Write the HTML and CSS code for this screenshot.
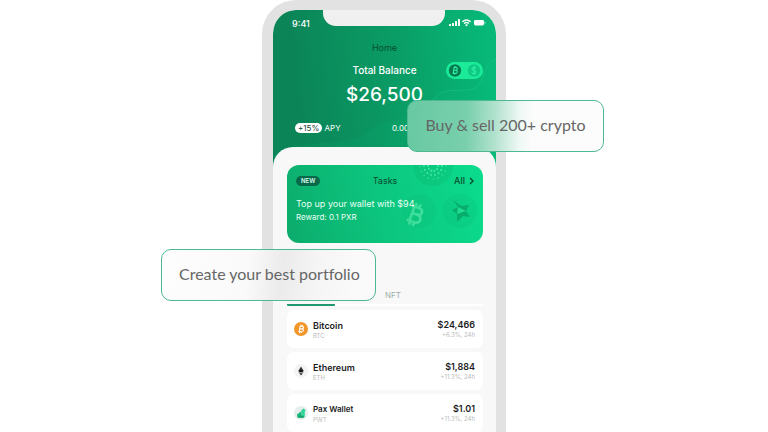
FILE: index.html
```html
<!doctype html>
<html lang="en">
<head>
	<meta charset="UTF-8" />
	<title>Crypto wallet</title>
	<link rel="stylesheet" href="styles.css">
</head>
<body>
	<main class="stage">
		<div class="device">
			<section class="phone">
				<div class="notch"></div>
				<header class="hero">
					<svg class="wave" viewBox="0 0 223 160" preserveAspectRatio="none" aria-hidden="true">
						<path d="M223 50C208 54 213 78 198 81C181 84 169 77 158 94C145 117 114 106 92 126C68 142 34 128 0 148V160H223Z" fill="#14d689" fill-opacity=".07"/>
						<path d="M223 50C208 54 213 78 198 81C181 84 169 77 158 94" fill="none" stroke="#35d99a" stroke-opacity=".3"/>
					</svg>
					<div class="status">
						<time>9:41</time>
						<svg width="37" height="8" viewBox="0 0 37 8" fill="#fff" aria-hidden="true">
							<rect x="0" y="5" width="2" height="2" rx=".5"/>
							<rect x="3" y="4" width="2" height="3" rx=".5"/>
							<rect x="6" y="2" width="2" height="5" rx=".5"/>
							<rect x="9" y="0" width="2" height="7" rx=".5"/>
							<path d="M13.4 2.8Q17.5-.8 21.6 2.8M15 4.6Q17.5 2.4 20 4.6" fill="none" stroke="#fff" stroke-width="1.3"/>
							<path d="M16 5.8Q17.5 4.8 19 5.8L17.5 7.4Z"/>
							<rect x="25" y="1" width="10" height="5.5" rx="1.4"/>
							<rect x="35.5" y="2.8" width="1" height="2" rx=".5" opacity=".6"/>
						</svg>
					</div>
					<h1>Home</h1>
					<div class="total">
						<h2>Total Balance</h2>
						<button class="currency" type="button" aria-label="Switch currency">
							<svg width="37" height="17" viewBox="0 0 37 17" aria-hidden="true">
								<circle cx="9" cy="8.5" r="6.2" fill="#087a50"/>
								<path d="M7.6 5.4H9.8Q11.4 5.5 11.2 7Q11 8.3 9.6 8.3H7.4M9.6 8.3Q11.5 8.4 11.2 10Q11 11.4 9.3 11.4H6.6M8.2 5.4L7.4 11.4M9 4.2V5.4M8.6 11.4V12.6" fill="none" stroke="#2ff3a8" stroke-width="1.1"/>
								<circle cx="28" cy="8.5" r="6.2" fill="#0fc983"/>
								<path d="M30.2 6.6Q29.7 5.3 28 5.3Q25.9 5.4 25.9 6.9Q26 8.2 28 8.5Q30.2 8.8 30.2 10.2Q30 11.7 28 11.7Q26.2 11.7 25.7 10.3M28 4V13" fill="none" stroke="#2ff3a8" stroke-width="1"/>
							</svg>
						</button>
					</div>
					<p class="amount">$26,500</p>
					<div class="yield">
						<p><b>+15%</b> APY</p>
						<p>0.00</p>
					</div>
				</header>
				<div class="sheet">
					<article class="task">
						<svg class="coins" width="82" height="78" viewBox="0 0 82 78" aria-hidden="true">
							<circle cx="32" cy="1" r="20" fill="#079a5f" fill-opacity=".16"/>
							<g fill="none" stroke="#66f5ba" stroke-width="1.8" stroke-linecap="round" stroke-opacity=".8">
								<circle cx="32" cy="1" r="5" stroke-dasharray="0 3.1"/>
								<circle cx="32" cy="1" r="9" stroke-dasharray="0 4"/>
								<circle cx="32" cy="1" r="13" stroke-width="1.2" stroke-dasharray="0 5"/>
							</g>
							<circle cx="18" cy="46" r="17" fill="#0a9d63" fill-opacity=".08"/>
							<g fill="none" stroke="#4fe6a5" stroke-opacity=".75" stroke-width="2.6" transform="rotate(20 14 49)">
								<path d="M9 42H15Q20 42 20 45.5Q20 49 15 49H10M15 49Q21 49 21 53Q21 57 15 57H8M11 42V57M12 38V42M16 38V42M12 57V61M16 57V61"/>
							</g>
							<circle cx="59" cy="46" r="17" fill="#0a9d63" fill-opacity=".1"/>
							<path d="M52 35L60 41L68 40L65 46L69 52L62 51L56 57L56 49L51 45L57 42Z" fill="#08995f" fill-opacity=".65"/>
							<path d="M57 42L65 46L56 49Z" fill="#20dc90"/>
						</svg>
						<div class="task-head">
							<span class="badge">NEW</span>
							<h3>Tasks</h3>
							<a href="#all">All <svg width="5" height="8" viewBox="0 0 5 8" aria-hidden="true"><path d="M1 1L4 4L1 7" fill="none" stroke="#07492f" stroke-width="1.4"/></svg></a>
						</div>
						<p class="task-title">Top up your wallet with $94</p>
						<p class="reward">Reward: 0.1 PXR</p>
					</article>
					<nav class="tabs">
						<button class="active" type="button" aria-label="Coins"></button>
						<button type="button">NFT</button>
					</nav>
					<ul class="coin-list">
						<li>
							<svg width="14" height="14" viewBox="0 0 14 14" aria-hidden="true">
								<circle cx="7" cy="7" r="7" fill="#f0962a"/>
								<path d="M5.8 4.2H8Q9.6 4.3 9.5 5.6Q9.3 6.8 8 6.9H5.4M8 6.9Q9.6 7 9.3 8.5Q9 9.8 7.5 9.8H4.5M6.2 4.2L5.2 9.8M7 2.9L6.8 4.2M8.6 3L8.4 4.3M5.9 9.8L5.7 11M7.5 9.8L7.3 11" fill="none" stroke="#fff" stroke-width="1.1"/>
							</svg>
							<div class="name"><h4>Bitcoin</h4><p>BTC</p></div>
							<div class="price"><b>$24,466</b><p>+6.3%, 24h</p></div>
						</li>
						<li>
							<svg width="14" height="14" viewBox="0 0 14 14" aria-hidden="true">
								<circle cx="7" cy="7" r="7" fill="#f4f4f5"/>
								<path d="M7 2.6L4.3 7L7 8.6L9.7 7Z" fill="#333"/>
								<path d="M4.3 7.8L7 11.4L9.7 7.8L7 9.4Z" fill="#333"/>
								<path d="M4.3 7L7 5.8L9.7 7L7 8.6Z" fill="#111"/>
							</svg>
							<div class="name"><h4>Ethereum</h4><p>ETH</p></div>
							<div class="price"><b>$1,884</b><p>+11.3%, 24h</p></div>
						</li>
						<li>
							<svg width="14" height="14" viewBox="0 0 14 14" aria-hidden="true">
								<circle cx="7" cy="7" r="7" fill="#e6eeeb"/>
								<path d="M3 8.5L7.5 5V11.5H3.5Z" fill="#17b67c"/>
								<path d="M7.5 4L9.5 2.5L11.5 4V5H10.8V10.5L7.5 11.5Z" fill="#2fd496"/>
								<path d="M3.5 11.5L6 9L10.8 10.5L9 12Z" fill="#12a36d"/>
							</svg>
							<div class="name small"><h4>Pax Wallet</h4><p>PWT</p></div>
							<div class="price"><b>$1.01</b><p>+11.3%, 24h</p></div>
						</li>
					</ul>
				</div>
			</section>
			<p class="callout buy">Buy &amp; sell 200+ crypto</p>
			<p class="callout create">Create your best portfolio</p>
		</div>
	</main>
</body>
</html>
```

FILE: styles.css
```css
*{
	margin: 0;
	padding: 0;
	box-sizing: border-box;
}
body{
	background: #fff;
	font-family: Inter, "Liberation Sans", sans-serif;
	color: #1c1c1e;
}
button{
	border: 0;
	background: none;
	font: inherit;
}
svg{
	display: block;
}
.stage{
	height: 100vh;
	overflow: hidden;
}
.device{
	position: relative;
	width: 244px;
	margin: 0 auto;
}

/* phone */
.phone{
	position: relative;
	border: solid #e2e2e2;
	border-width: 10px 10px 10px 11px;
	border-radius: 34px;
	background: #f8f8f8;
	overflow: hidden;
}
.notch{
	position: absolute;
	z-index: 1;
	top: 0;
	left: 50px;
	right: 51px;
	height: 16px;
	border-radius: 0 0 13px 13px;
	background: #f0f0f0;
}

/* green header */
.hero{
	position: relative;
	padding-bottom: 33px;
	background: linear-gradient(84deg, #0b8457 12%, #0a9c65 55%, #07b878 95%);
	border-radius: 22px 22px 0 0;
	color: #fff;
	text-align: center;
}
.wave{
	position: absolute;
	top: 0;
	left: 0;
	width: 100%;
	height: 100%;
}
.status{
	display: flex;
	justify-content: space-between;
	align-items: center;
	height: 26px;
	padding: 0 10px 0 19px;
	font-size: 9px;
	font-weight: 500;
}
.hero h1{
	margin-top: 6px;
	font-size: 9px;
	line-height: 12px;
	font-weight: 400;
	color: #074e33;
}
.total{
	display: grid;
	grid-template-columns: 1fr auto 1fr;
	align-items: center;
	margin-top: 8px;
}
.total h2{
	grid-column: 2;
	font-size: 10px;
	line-height: 17px;
	font-weight: 500;
}
.currency{
	position: relative;
	justify-self: end;
	margin-right: 13px;
	border-radius: 9px;
	background: #1beb99;
}
.amount{
	margin-top: 4px;
	font-size: 19px;
	line-height: 24px;
	font-weight: 500;
}
.yield{
	display: flex;
	justify-content: space-between;
	padding: 0 87px 0 22px;
	margin-top: 15px;
	font-size: 8px;
	line-height: 12px;
	position: relative;
}
.yield b{
	display: inline-block;
	padding: 0 3px;
	border-radius: 6px;
	background: #fff;
	color: #17452f;
	line-height: 10px;
	font-weight: 400;
}

/* sheet */
.sheet{
	position: relative;
	margin-top: -20px;
	padding: 18px 13px 24px 14px;
	border-radius: 20px 20px 0 0;
	background: #f8f8f8;
}
.task{
	position: relative;
	height: 78px;
	padding: 9px;
	border-radius: 12px;
	overflow: hidden;
	background: linear-gradient(75deg, #0cab6c, #0cc47d 45%, #0bdc8d);
	color: #e9fff5;
}
.coins{
	position: absolute;
	top: 0;
	right: 0;
}
.task-head{
	position: relative;
	display: grid;
	grid-template-columns: 1fr auto 1fr;
	align-items: center;
	height: 13px;
	color: #07492f;
}
.task-head h3{
	font-size: 9px;
	font-weight: 400;
}
.task-head a{
	display: flex;
	align-items: center;
	justify-content: flex-end;
	gap: 4px;
	font-size: 9px;
	font-weight: 500;
	color: inherit;
	text-decoration: none;
}
.badge{
	justify-self: start;
	padding: 0 5px;
	border-radius: 5px;
	background: #08694a;
	color: #d9fff0;
	font-size: 6px;
	line-height: 10px;
	font-weight: 600;
}
.task-title{
	position: relative;
	margin-top: 10px;
	font-size: 9px;
	line-height: 13px;
}
.reward{
	position: relative;
	margin-top: 1px;
	font-size: 8px;
	line-height: 13px;
}

/* tabs */
.tabs{
	display: flex;
	gap: 34px;
	height: 20px;
	margin-top: 43px;
	border-bottom: 2px solid #fff;
}
.tabs button{
	width: 48px;
	height: 20px;
	border-bottom: 2px solid transparent;
	color: #9db0a9;
	font-size: 8px;
}
.tabs .active{
	border-radius: 1px;
	border-color: #20976c;
}

/* coins */
.coin-list{
	display: grid;
	gap: 4px;
	margin-top: 4px;
	list-style: none;
}
.coin-list li{
	display: flex;
	align-items: center;
	gap: 5px;
	height: 38px;
	padding: 0 8px 0 7px;
	border-radius: 7px;
	background: #fff;
}
.name{
	padding-top: 2px;
}
.name h4{
	font-size: 9px;
	line-height: 11px;
	font-weight: 600;
}
.small h4{
	font-size: 8px;
}
.coin-list p{
	font-size: 6px;
	line-height: 9px;
	color: #bbb;
}
.price{
	margin-left: auto;
	text-align: right;
	font-size: 9px;
	line-height: 11px;
}
.price b{
	display: block;
	font-weight: 600;
}

/* floating labels */
.callout{
	position: absolute;
	border: 1px solid #4cb894;
	border-radius: 10px;
	padding: 0 17px 3px;
	font-family: Lato, "Liberation Sans", sans-serif;
	font-size: 16px;
	line-height: 47px;
	font-variant-ligatures: none;
	color: #666;
	text-align: center;
	white-space: nowrap;
}
.buy{
	top: 100px;
	left: 145px;
	width: 197px;
	background: linear-gradient(92deg, #68c9a2 0, #78cfac 30%, #b3e2cf 45%, #eef8f4 57%, #fcfcfc 64%);
}
.create{
	top: 249px;
	right: 130px;
	width: 215px;
	background: linear-gradient(97deg, #fdfdfd 0, #fafafa 40%, #ebebeb 56%, #f5f5f5 72%, #fafafa 90%);
}
```
